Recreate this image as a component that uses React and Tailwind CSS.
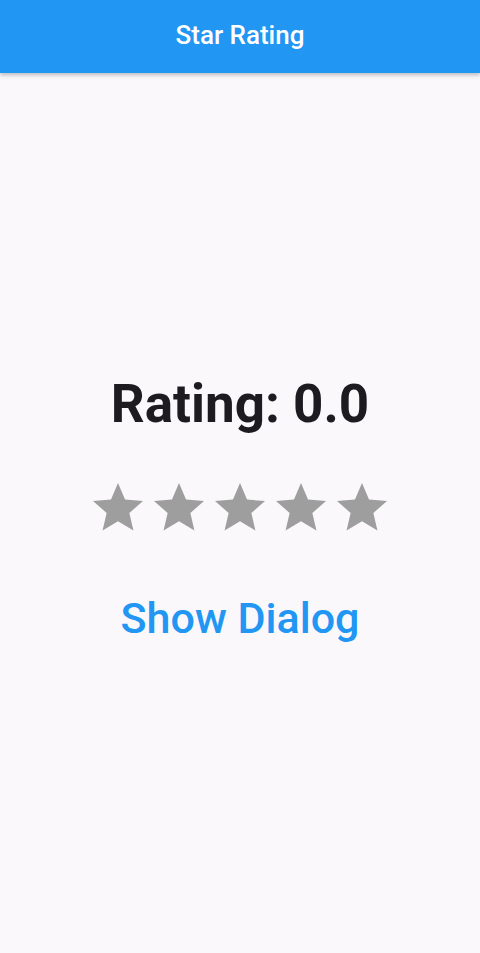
function StarIcon() {
  return (
    <svg viewBox="0 0 24 24" className="h-[60px] w-[60px] fill-[#9e9e9e]">
      <path d="M12 17.27L18.18 21l-1.64-7.03L22 9.24l-7.19-.61L12 2 9.19 8.63 2 9.24l5.46 4.73L5.82 21z" />
    </svg>
  );
}

function App() {
  return (
    <div className="flex h-[953px] w-[480px] flex-col bg-[#faf8fb] font-['Roboto',sans-serif]">
      <header className="flex h-[73px] shrink-0 items-center justify-center bg-[#2196f3] pb-[3px] shadow-[0_2px_4px_rgba(0,0,0,0.25)]">
        <h1 className="text-[26px] font-medium leading-[30px] text-white">Star Rating</h1>
      </header>
      <main className="flex flex-1 flex-col items-center justify-center pb-[10px]">
        <p className="text-[53px] font-bold leading-[62px] text-[#1d1b20]">
          Rating: 0.0
        </p>
        <div className="mt-[43px] flex gap-[1px]">
          {Array.from({ length: 5 }).map((_, index) => (
            <StarIcon key={index} />
          ))}
        </div>
        <button className="mt-[55px] px-4 text-[43px] font-medium leading-[50px] text-[#2196f3]">
          Show Dialog
        </button>
      </main>
    </div>
  );
}

export default App;
